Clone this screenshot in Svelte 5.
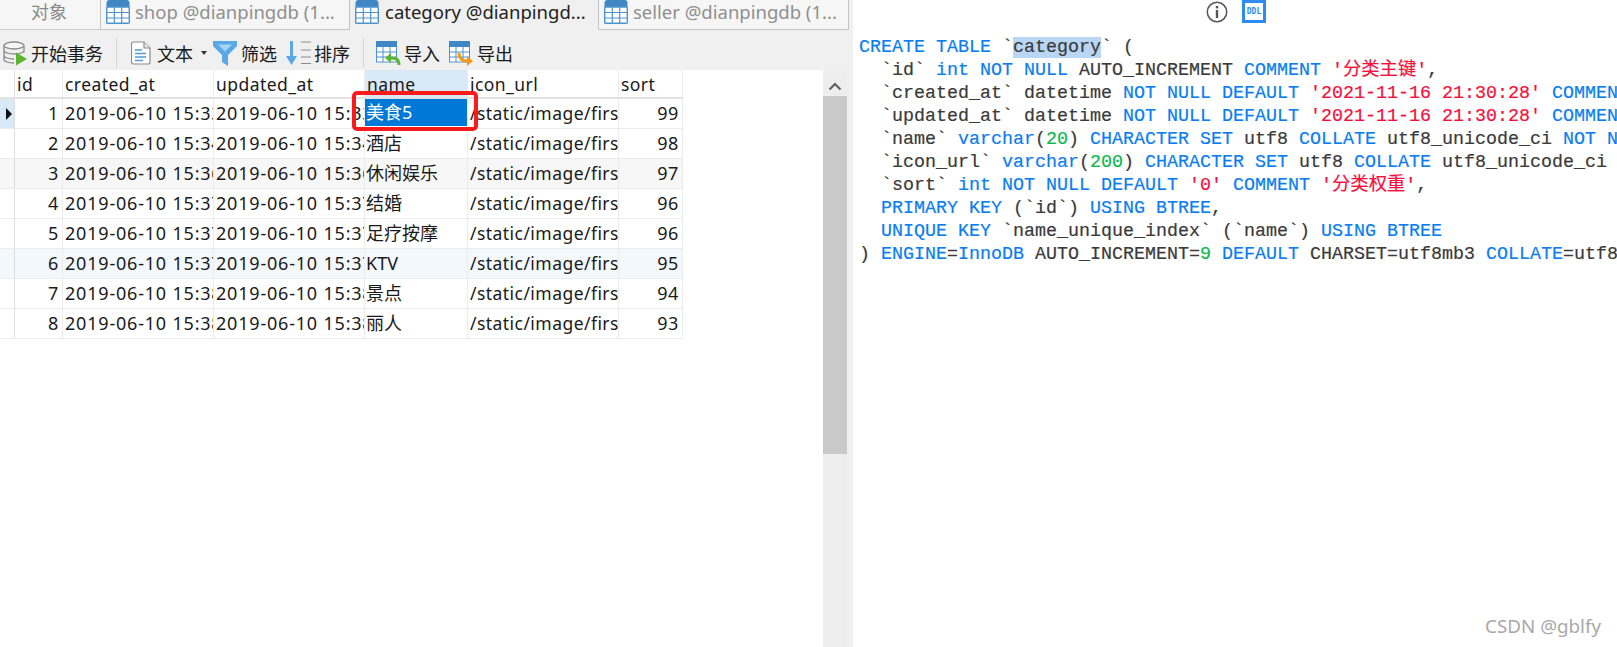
<script>
  const cols = [48, 151, 151, 103, 151, 64];
  const head = ['id', 'created_at', 'updated_at', 'name', 'icon_url', 'sort'];
  const rows = [
    ['1', '2019-06-10 15:33:01', '2019-06-10 15:33:01', '美食5', '99'],
    ['2', '2019-06-10 15:34:01', '2019-06-10 15:34:01', '酒店', '98'],
    ['3', '2019-06-10 15:36:01', '2019-06-10 15:36:01', '休闲娱乐', '97'],
    ['4', '2019-06-10 15:37:01', '2019-06-10 15:37:01', '结婚', '96'],
    ['5', '2019-06-10 15:37:11', '2019-06-10 15:37:11', '足疗按摩', '96'],
    ['6', '2019-06-10 15:37:21', '2019-06-10 15:37:21', 'KTV', '95'],
    ['7', '2019-06-10 15:38:01', '2019-06-10 15:38:01', '景点', '94'],
    ['8', '2019-06-10 15:38:11', '2019-06-10 15:38:11', '丽人', '93']
  ];
  const tabs = [
    { label: 'shop @dianpingdb (1...', cls: 'tab' },
    { label: 'category @dianpingd...', cls: 'tab active' },
    { label: 'seller @dianpingdb (1...', cls: 'tab last' }
  ];
</script>

{#snippet tableIcon()}
  <svg class="tabicon" width="24" height="24" viewBox="0 0 24 24">
    <path d="M0.500 3a3 3 0 0 1 3-3h17a3 3 0 0 1 3 3v5h-23z" fill="#3f87c5" />
    <rect x="0.700" y="7" width="22.600" height="16.300" rx="1" fill="#fff" stroke="#4d94cf" stroke-width="1.400" />
    <path d="M1 12.500h22M1 18h22M8.300 7v16M15.700 7v16" stroke="#4d94cf" stroke-width="1.200" fill="none" />
  </svg>
{/snippet}

<div class="page">
  <section class="left">
    <nav class="tabbar">
      <div class="objects">对象</div>
      {#each tabs as t}
        <div class={t.cls}>
          {@render tableIcon()}
          <span>{t.label}</span>
        </div>
      {/each}
    </nav>

    <div class="toolbar">
      <div class="tool first">
        <svg width="27" height="25" viewBox="0 0 27 25">
          <ellipse cx="11" cy="4.500" rx="10" ry="3.500" fill="#f7f7f7" stroke="#8a8a8a" stroke-width="1.300" />
          <path d="M1 4.500v14c0 2 4.500 3.500 10 3.500M21 4.500v7M1 9.500c0 2 4.500 3.500 10 3.500s10-1.500 10-3.500M1 14.500c0 2 4.500 3.500 10 3.500" fill="none" stroke="#8a8a8a" stroke-width="1.300" />
          <path d="M13 11.500l11 6.500-11 6.500z" fill="#5cb531" />
        </svg>
        <span>开始事务</span>
      </div>
      <div class="sep"></div>
      <div class="tool text">
        <svg width="20" height="24" viewBox="0 0 20 24">
          <path d="M2.500 1h10.500l6 6v14a2 2 0 0 1-2 2H2.500a2 2 0 0 1-2-2V3a2 2 0 0 1 2-2z" fill="#fff" stroke="#8c8c8c" stroke-width="1.200" />
          <path d="M13 1v6h6" fill="#e8e8e8" stroke="#8c8c8c" stroke-width="1.200" />
          <path d="M4 9h7M4 12.500h11M4 16h11M4 19.500h8" stroke="#4f9fdd" stroke-width="1.300" fill="none" />
        </svg>
        <span>文本</span>
        <i class="caret"></i>
      </div>
      <div class="tool filter">
        <svg width="24" height="25" viewBox="0 0 24 25">
          <path d="M0 0h24v5L15 14v11l-6-4v-7L0 5z" fill="#5aa9e6" />
          <path d="M5 3.500h14l-7 7z" fill="#a9d4f5" />
        </svg>
        <span>筛选</span>
      </div>
      <div class="tool order">
        <svg width="25" height="25" viewBox="0 0 25 25">
          <path d="M5.500 0v17" stroke="#5aa9e6" stroke-width="3" fill="none" />
          <path d="M0 15h11l-5.500 9z" fill="#5aa9e6" />
          <path d="M15 1h10M15 9h10M15 16h10M15 22.500h10" stroke="#8c8c8c" stroke-width="1.200" fill="none" />
        </svg>
        <span>排序</span>
      </div>
      <div class="sep second"></div>
      <div class="tool imp">
        <svg width="25" height="25" viewBox="0 0 25 25">
          <rect x="0.500" y="1" width="20" height="20" fill="#fff" stroke="#4d94cf" />
          <rect x="0" y="0" width="21" height="6" fill="#3f87c5" />
          <path d="M0.500 11h20M0.500 16h20M7 6v15M14 6v15" stroke="#4d94cf" fill="none" />
          <path d="M23 24c0-6-3-7-9-7" fill="none" stroke="#5cb531" stroke-width="3" />
          <path d="M15 12v10l-6-5z" fill="#5cb531" />
        </svg>
        <span>导入</span>
      </div>
      <div class="tool exp">
        <svg width="25" height="25" viewBox="0 0 25 25">
          <rect x="0.500" y="1" width="20" height="20" fill="#fff" stroke="#4d94cf" />
          <rect x="0" y="0" width="21" height="6" fill="#3f87c5" />
          <path d="M0.500 11h20M0.500 16h20M7 6v15M14 6v15" stroke="#4d94cf" fill="none" />
          <path d="M10 12c0 6 3 8 8 8" fill="none" stroke="#f59a1b" stroke-width="3" />
          <path d="M18 15v10l6-5z" fill="#f59a1b" />
        </svg>
        <span>导出</span>
      </div>
    </div>

    <div class="gridwrap">
      <div class="grid">
        <div class="row headrow">
          <div class="marker"></div>
          {#each head as h, i}
            <div class="cell" class:namehead={h === 'name'} style:width="{cols[i]}px">{h}</div>
          {/each}
        </div>
        {#each rows as r, ri}
          <div class="row" class:alt={ri === 2} class:hover={ri === 5}>
            <div class="marker" class:current={ri === 0}>
              {#if ri === 0}<i class="arrow"></i>{/if}
            </div>
            <div class="cell num" style:width="{cols[0]}px">{r[0]}</div>
            <div class="cell date" style:width="{cols[1]}px">{r[1]}</div>
            <div class="cell date" style:width="{cols[2]}px">{r[2]}</div>
            <div class="cell name" class:selected={ri === 0} style:width="{cols[3]}px">{r[3]}</div>
            <div class="cell" style:width="{cols[4]}px">/static/image/firstpage.png</div>
            <div class="cell num" style:width="{cols[5]}px">{r[4]}</div>
          </div>
        {/each}
        <div class="redbox"></div>
      </div>
      <div class="scroll">
        <svg class="chev" width="14" height="9" viewBox="0 0 14 9">
          <path d="M1.500 7.500L7 2l5.500 5.500" fill="none" stroke="#606060" stroke-width="2.200" />
        </svg>
        <div class="thumb"></div>
      </div>
    </div>
  </section>

  <section class="right">
    <div class="icons">
      <svg width="22" height="22" viewBox="0 0 22 22">
        <circle cx="11" cy="11" r="9.700" fill="none" stroke="#555" stroke-width="1.500" />
        <rect x="9.800" y="5" width="2.400" height="2.400" fill="#555" />
        <rect x="9.800" y="9" width="2.400" height="8" fill="#555" />
      </svg>
      <div class="ddl"><span>DDL</span></div>
    </div>
    <pre class="sql"><span class="k">CREATE TABLE</span> `<mark>category</mark>` (
  `id` <span class="k">int NOT NULL</span> AUTO_INCREMENT <span class="k">COMMENT</span> <span class="s">'分类主键'</span>,
  `created_at` datetime <span class="k">NOT NULL DEFAULT</span> <span class="s">'2021-11-16 21:30:28'</span> <span class="k">COMMENT</span> <span class="s">'创建时间'</span>,
  `updated_at` datetime <span class="k">NOT NULL DEFAULT</span> <span class="s">'2021-11-16 21:30:28'</span> <span class="k">COMMENT</span> <span class="s">'修改时间'</span>,
  `name` <span class="k">varchar</span>(<span class="n">20</span>) <span class="k">CHARACTER SET</span> utf8 <span class="k">COLLATE</span> utf8_unicode_ci <span class="k">NOT NULL</span>,
  `icon_url` <span class="k">varchar</span>(<span class="n">200</span>) <span class="k">CHARACTER SET</span> utf8 <span class="k">COLLATE</span> utf8_unicode_ci <span class="k">NOT NULL</span>,
  `sort` <span class="k">int NOT NULL DEFAULT</span> <span class="s">'0'</span> <span class="k">COMMENT</span> <span class="s">'分类权重'</span>,
  <span class="k">PRIMARY KEY</span> (`id`) <span class="k">USING BTREE</span>,
  <span class="k">UNIQUE KEY</span> `name_unique_index` (`name`) <span class="k">USING BTREE</span>
) <span class="k">ENGINE</span>=<span class="k">InnoDB</span> AUTO_INCREMENT=<span class="n">9</span> <span class="k">DEFAULT</span> CHARSET=utf8mb3 <span class="k">COLLATE</span>=utf8mb3_unicode_ci</pre>
    <div class="mark">CSDN @gblfy</div>
  </section>
</div>

<style>
  :global(body) { margin: 0; background: #fff; }
  .page {
    display: flex;
    width: 1617px;
    height: 647px;
    overflow: hidden;
    font-family: "Noto Sans", "Noto Sans CJK SC", sans-serif;
  }
  .left {
    width: 853px;
    flex: none;
    display: flex;
    flex-direction: column;
    background: #f0f0f0;
  }
  .tabbar {
    display: flex;
    height: 30px;
    flex: none;
    font-size: 18.5px;
  }
  .objects {
    width: 100px;
    color: #8a8a8a;
    padding-left: 31px;
    box-sizing: border-box;
    line-height: 24px;
    font-size: 18px;
    background: #f6f6f6;
    border-bottom: 1px solid #cfcfcf;
  }
  .tab {
    width: 250px;
    box-sizing: border-box;
    display: flex;
    align-items: flex-start;
    gap: 5px;
    padding-left: 5px;
    background: #f6f6f6;
    color: #8f8f8f;
    border-left: 1px solid #c4c4c4;
    border-right: 1px solid #c4c4c4;
    border-bottom: 1px solid #c4c4c4;
    line-height: 24px;
    white-space: nowrap;
  }
  .tab.active {
    width: 248px;
    background: #f0f0f0;
    color: #222;
    border: none;
    gap: 6px;
  }
  .tab.last { width: 251px; }
  .tabicon { flex: none; }
  .toolbar {
    height: 40px;
    box-sizing: border-box;
    padding-top: 6px;
    flex: none;
    display: flex;
    align-items: center;
    font-size: 18px;
    color: #1a1a1a;
  }
  .tool {
    display: flex;
    align-items: center;
    gap: 3px;
  }
  .first { margin-left: 3px; gap: 1px; }
  .sep { width: 1px; height: 30px; background: #d4d4d4; margin: 0 14px 0 13px; }
  .sep.second { margin: 0 12px 0 13px; }
  .text { gap: 6px; margin-right: 6px; }
  .caret {
    width: 0; height: 0; margin-left: 2px;
    border-left: 3px solid transparent;
    border-right: 3px solid transparent;
    border-top: 4px solid #333;
  }
  .filter { gap: 4px; margin-right: 9px; }
  .imp { margin-right: 9px; }
  .gridwrap {
    flex: 1;
    display: flex;
    padding-right: 6px;
    min-height: 0;
  }
  .grid {
    position: relative;
    flex: 1;
    background: #fff;
    font-size: 17.500px;
    color: #1a1a1a;
  }
  .row {
    display: flex;
    height: 30px;
    box-sizing: border-box;
    border-bottom: 1px solid #ebebeb;
    width: 683px;
  }
  .headrow { height: 29px; border-bottom: 2px solid #e2e2e2; }
  .row.alt { background: #f7f7f7; }
  .row.hover { background: #f3f8fd; }
  .marker {
    width: 15px;
    flex: none;
    box-sizing: border-box;
    border-right: 1px solid #dcdcdc;
    display: flex;
    align-items: center;
    padding-left: 6px;
  }
  .marker.current { background: #d9e9f7; }
  .arrow {
    width: 0; height: 0;
    border-top: 6px solid transparent;
    border-bottom: 6px solid transparent;
    border-left: 6px solid #111;
  }
  .cell {
    flex: none;
    box-sizing: border-box;
    padding-left: 2px;
    line-height: 29px;
    white-space: nowrap;
    overflow: hidden;
    border-right: 1px solid #ebebeb;
    letter-spacing: 0.45px;
  }
  .headrow .cell { line-height: 28px; }
  .cell.date { font-size: 18px; letter-spacing: 0.8px; }
  .cell.num {
    font-size: 18px;
    letter-spacing: 0.6px;
    text-align: right;
    padding-right: 3px;
    padding-left: 0;
  }
  .cell.name { letter-spacing: 0; font-size: 18px; padding-left: 1px; }
  .namehead { background: #d9e9f7; }
  .cell.selected {
    background: #0078d7;
    color: #fff;
    height: 27px;
    line-height: 27px;
  }
  .redbox {
    position: absolute;
    left: 352px;
    top: 21px;
    width: 126px;
    height: 40px;
    box-sizing: border-box;
    border: 4px solid #fb1b1b;
    border-radius: 5px;
  }
  .scroll {
    width: 24px;
    flex: none;
    background: #eeeeee;
    display: flex;
    flex-direction: column;
    align-items: center;
  }
  .chev { margin-top: 12px; margin-bottom: 5px; }
  .thumb { width: 100%; height: 358px; background: #c9c9c9; }
  .right {
    flex: 1;
    position: relative;
    background: #fff;
    min-width: 0;
  }
  .icons {
    display: flex;
    align-items: center;
    height: 23px;
    padding-left: 353px;
    gap: 14px;
  }
  .ddl {
    width: 24px;
    height: 23px;
    box-sizing: border-box;
    border: 3px solid #2d8cf0;
    display: flex;
    align-items: center;
    justify-content: center;
  }
  .ddl span {
    font: bold 8px "DejaVu Sans Mono", monospace;
    color: #2d8cf0;
  }
  .sql {
    margin: 13px 0 0 6px;
    font-family: "Liberation Mono", "Noto Sans CJK SC", monospace;
    font-size: 18.330px;
    line-height: 23px;
    color: #3a3a3a;
    white-space: pre;
    -webkit-text-stroke: 0.2px currentColor;
  }
  .k { color: #0a7df0; }
  .s { color: #f5103c; }
  .n { color: #0cb84e; }
  mark { background: #b9d7f5; color: #3a3a3a; }
  .mark {
    position: absolute;
    right: 16px;
    top: 614px;
    font-size: 18.800px;
    color: #a8a8a8;
    line-height: 24px;
  }
</style>
